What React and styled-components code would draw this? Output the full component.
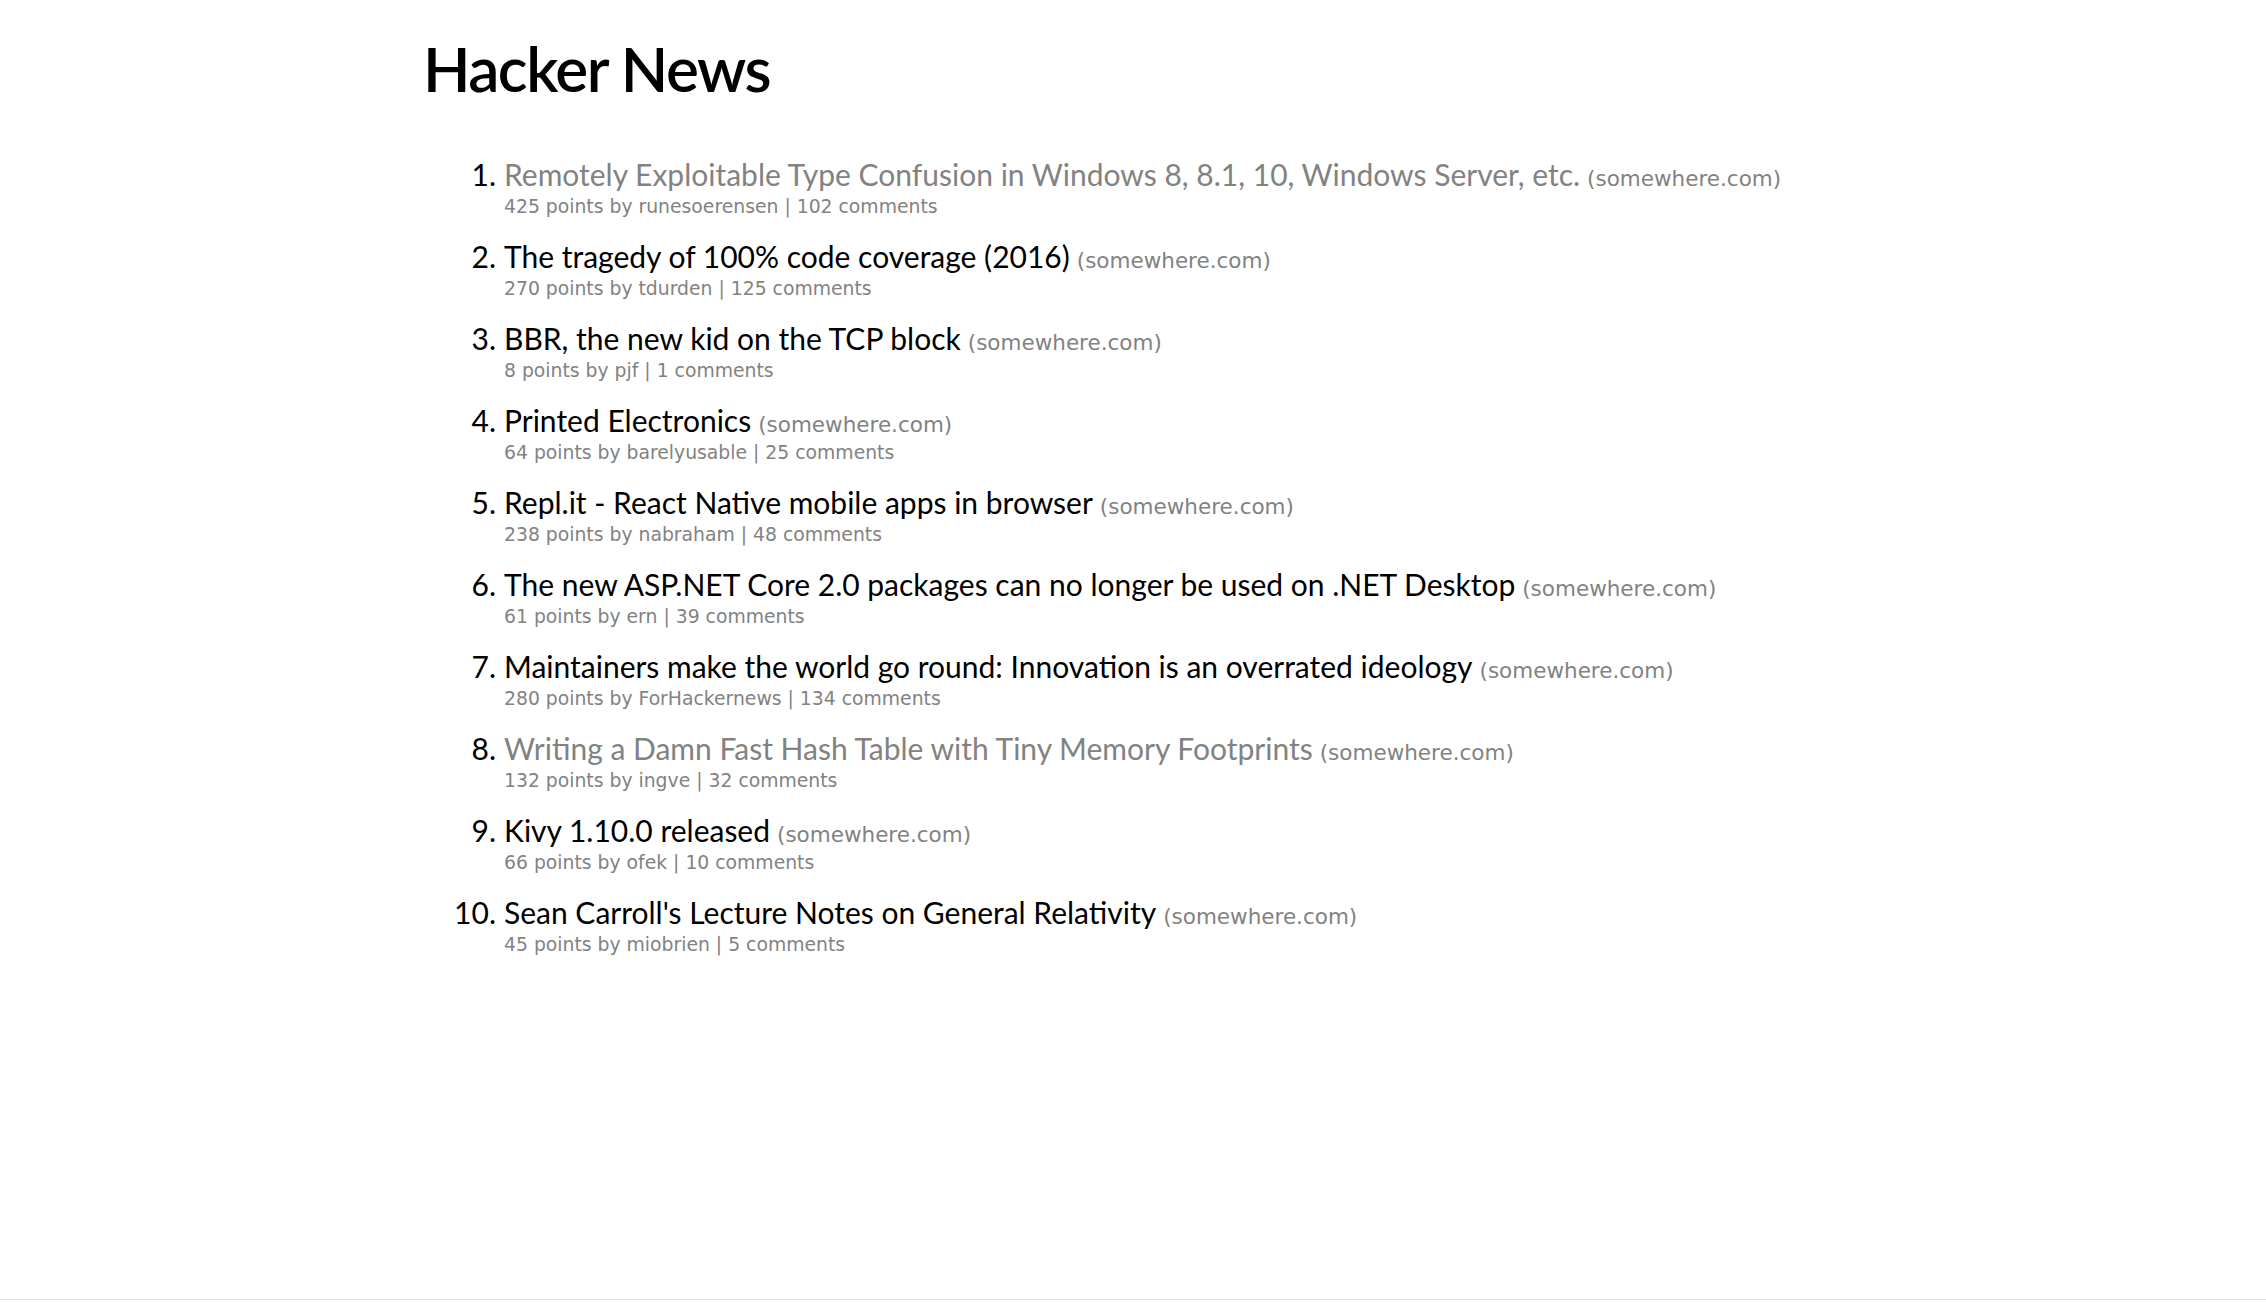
import styled, { createGlobalStyle } from "styled-components";

const GlobalStyle = createGlobalStyle`
  html, body {
    margin: 0;
    padding: 0;
    background: #fff;
  }
`;

const stories = [
  { title: "Remotely Exploitable Type Confusion in Windows 8, 8.1, 10, Windows Server, etc.", points: 425, by: "runesoerensen", comments: 102, visited: true },
  { title: "The tragedy of 100% code coverage (2016)", points: 270, by: "tdurden", comments: 125 },
  { title: "BBR, the new kid on the TCP block", points: 8, by: "pjf", comments: 1 },
  { title: "Printed Electronics", points: 64, by: "barelyusable", comments: 25 },
  { title: "Repl.it - React Native mobile apps in browser", points: 238, by: "nabraham", comments: 48 },
  { title: "The new ASP.NET Core 2.0 packages can no longer be used on .NET Desktop", points: 61, by: "ern", comments: 39 },
  { title: "Maintainers make the world go round: Innovation is an overrated ideology", points: 280, by: "ForHackernews", comments: 134 },
  { title: "Writing a Damn Fast Hash Table with Tiny Memory Footprints", points: 132, by: "ingve", comments: 32, visited: true },
  { title: "Kivy 1.10.0 released", points: 66, by: "ofek", comments: 10 },
  { title: "Sean Carroll's Lecture Notes on General Relativity", points: 45, by: "miobrien", comments: 5 },
];

const Page = styled.div`
  min-height: 1300px;
  box-sizing: border-box;
  border-bottom: 1px solid #e6e6e6;
  padding: 0 0 0 423px;
`;

const Header = styled.h1`
  margin: 0;
  padding-top: 28px;
  font-family: "Lato", "Liberation Sans", sans-serif;
  font-weight: 600;
  font-size: 62px;
  line-height: 80px;
  color: #000;
  letter-spacing: -1.5px;
`;

const List = styled.ol`
  list-style: none;
  margin: 0;
  padding: 50px 0 0 0;
  display: flex;
  flex-direction: column;
  gap: 21px;
`;

const Item = styled.li`
  display: grid;
  grid-template-columns: 73px 1fr;
  column-gap: 8px;
`;

const Rank = styled.span`
  font-family: "Lato", "Liberation Sans", sans-serif;
  font-size: 30px;
  line-height: 33px;
  color: #000;
  text-align: right;
`;

const Title = styled.div`
  font-family: "Lato", "Liberation Sans", sans-serif;
  font-size: 30px;
  line-height: 33px;
  color: ${(p) => (p.$visited ? "#828282" : "#000")};
`;

const Domain = styled.span`
  font-family: "DejaVu Sans", Verdana, sans-serif;
  font-size: 21.5px;
  color: #828282;
  margin-left: 7px;
`;

const Meta = styled.div`
  grid-column: 2;
  font-family: "DejaVu Sans", Verdana, sans-serif;
  font-size: 18.8px;
  line-height: 24px;
  color: #828282;
`;

export default function App() {
  return (
    <Page>
      <GlobalStyle />
      <Header>Hacker News</Header>
      <List>
        {stories.map((s, i) => (
          <Item key={i}>
            <Rank>{i + 1}.</Rank>
            <Title $visited={s.visited}>
              {s.title}
              <Domain>(somewhere.com)</Domain>
            </Title>
            <Meta>
              {s.points} points by {s.by} | {s.comments} comments
            </Meta>
          </Item>
        ))}
      </List>
    </Page>
  );
}
